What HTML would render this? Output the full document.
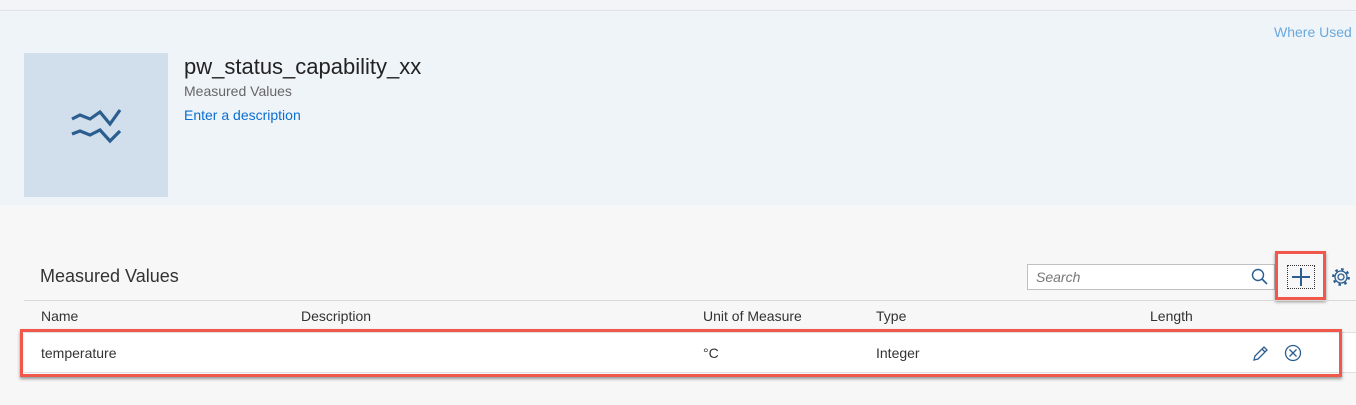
<!DOCTYPE html>
<html><head><style>
*{margin:0;padding:0;box-sizing:border-box}
body{width:1356px;height:405px;overflow:hidden;background:#f7f7f7;font-family:"Liberation Sans",Arial,sans-serif;position:relative}
.a{position:absolute}
.t{position:absolute;white-space:nowrap}
</style></head><body>
<div class="a" style="left:0;top:0;width:1356px;height:11px;background:#f2f4f7;border-bottom:1px solid #d9e3ee"></div>
<div class="a" style="left:0;top:12px;width:1356px;height:193px;background:#eff4f9"></div>
<div class="t" style="left:1274px;top:24px;font-size:14px;color:#6aa9dd">Where Used</div>
<div class="a" style="left:24px;top:53px;width:144px;height:144px;background:#d1deec"></div>
<svg class="a" style="left:70px;top:105px" width="54" height="42" viewBox="70 105 54 42"><path d="M72 119 L80 115 L90 119 L100 112 L110 124 L120 110" fill="none" stroke="#2b5e8e" stroke-width="3.2"/><path d="M72 134 L80 131 L90 135 L100 130 L110 141 L120 131" fill="none" stroke="#2b5e8e" stroke-width="3.2"/></svg>
<div class="t" style="left:184px;top:54px;font-size:22px;color:#222">pw_status_capability_xx</div>
<div class="t" style="left:184px;top:83px;font-size:14px;color:#666">Measured Values</div>
<div class="t" style="left:184px;top:107px;font-size:14px;color:#0a6ed1">Enter a description</div>

<div class="t" style="left:40px;top:266px;font-size:18px;color:#333">Measured Values</div>
<div class="a" style="left:1027px;top:264px;width:248px;height:26px;background:#fff;border:1px solid #c0c0c0"></div>
<div class="t" style="left:1036px;top:269px;font-size:14px;color:#777;font-style:italic">Search</div>
<svg class="a" style="left:1251px;top:268px" width="18" height="18"><circle cx="7" cy="7" r="5.5" fill="none" stroke="#2b5e8e" stroke-width="1.4"/><path d="M11 11 L16 16" stroke="#2b5e8e" stroke-width="1.6"/></svg>
<div class="a" style="left:1275px;top:251px;width:51px;height:49px;border:3px solid #f0584b;box-shadow:0 2px 3px rgba(0,0,0,.4)"></div>
<div class="a" style="left:1287px;top:265px;width:28px;height:24px;border:1px dotted #333"></div>
<svg class="a" style="left:1291px;top:267px" width="20" height="20"><path d="M10 1V19M1 10H19" stroke="#2b5e8e" stroke-width="2"/></svg>
<svg class="a" style="left:1331px;top:267px" width="20" height="20" viewBox="0 0 20 20"><circle cx="10" cy="10" r="3" fill="none" stroke="#2b5e8e" stroke-width="1.3"/><circle cx="10" cy="10" r="6" fill="none" stroke="#2b5e8e" stroke-width="1.3"/><circle cx="10" cy="10" r="7.8" fill="none" stroke="#2b5e8e" stroke-width="2.2" stroke-dasharray="2.6 3.5"/></svg>

<div class="a" style="left:24px;top:300px;width:1332px;height:1px;background:#d8d8d8"></div>
<div class="t" style="left:41px;top:308px;font-size:14px;color:#333">Name</div>
<div class="t" style="left:301px;top:308px;font-size:14px;color:#333">Description</div>
<div class="t" style="left:703px;top:308px;font-size:14px;color:#333">Unit of Measure</div>
<div class="t" style="left:876px;top:308px;font-size:14px;color:#333">Type</div>
<div class="t" style="left:1150px;top:308px;font-size:14px;color:#333">Length</div>
<div class="a" style="left:24px;top:332px;width:1332px;height:41px;background:#fff;border-top:1px solid #e0e0e0;border-bottom:1px solid #e0e0e0"></div>
<div class="a" style="left:20px;top:329px;width:1322px;height:48px;border:3px solid #f0584b;box-shadow:0 2px 3px rgba(0,0,0,.4)"></div>
<div class="t" style="left:41px;top:345px;font-size:14px;color:#333">temperature</div>
<div class="t" style="left:703px;top:345px;font-size:14px;color:#333">°C</div>
<div class="t" style="left:876px;top:345px;font-size:14px;color:#333">Integer</div>
<svg class="a" style="left:1252px;top:345px" width="17" height="17"><path d="M2 15 L3 11 L12 2 L15 5 L6 14 Z M10 4 L13 7" fill="none" stroke="#2b5e8e" stroke-width="1.3"/></svg>
<svg class="a" style="left:1284px;top:344px" width="18" height="18"><circle cx="9" cy="9" r="7.5" fill="none" stroke="#2b5e8e" stroke-width="1.3"/><path d="M5.5 5.5L12.5 12.5M12.5 5.5L5.5 12.5" stroke="#2b5e8e" stroke-width="1.3"/></svg>
</body></html>
